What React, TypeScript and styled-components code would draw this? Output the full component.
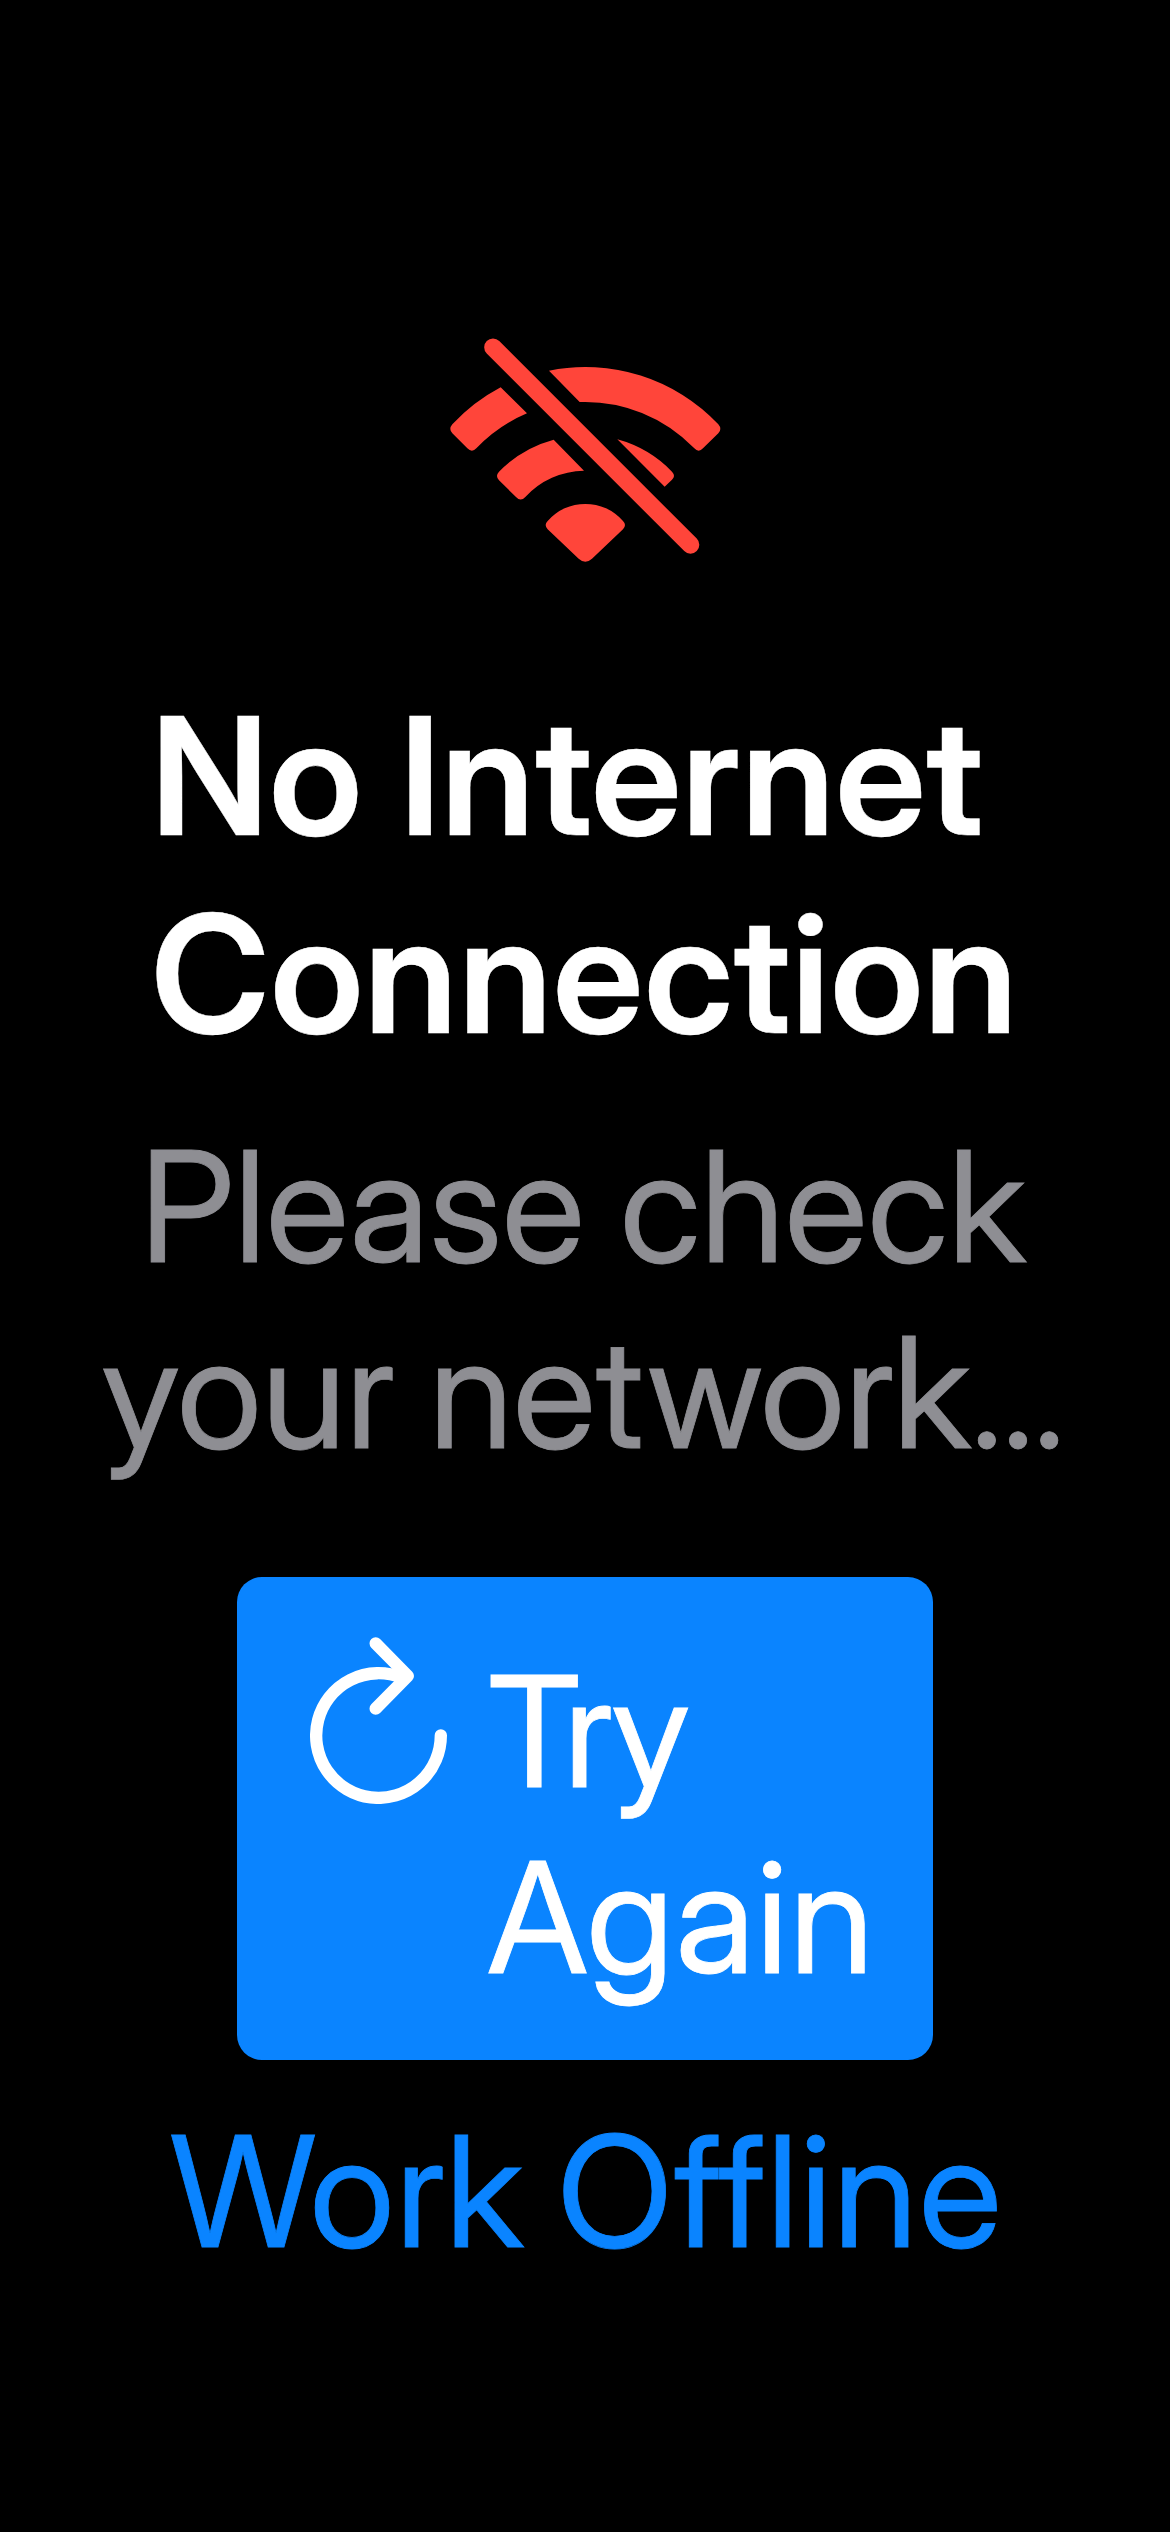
import React from "react";
import styled, { createGlobalStyle } from "styled-components";

const GlobalStyle = createGlobalStyle`
  body {
    margin: 0;
    background: #000;
    font-family: "Inter Display", Inter, "Liberation Sans", sans-serif;
  }
`;

const Screen = styled.main`
  box-sizing: border-box;
  width: 1170px;
  height: 2532px;
  padding-top: 338px;
  overflow: hidden;
  display: flex;
  flex-direction: column;
  align-items: center;
  background: #000;
`;

const WifiOffIcon = styled.svg`
  display: block;
  flex: none;
  width: 270.67px;
  height: 224px;
  margin: 0 0 115px 1px;
  fill: #ff453a;
`;

const Title = styled.h1`
  width: 868px;
  margin: 0 0 40px;
  font-size: 163.5px;
  font-weight: 600;
  line-height: 198px;
  color: #fff;
  -webkit-text-stroke: 0.4px currentColor;
`;

const Message = styled.p`
  margin: 0 4px 92px 0;
  font-size: 154px;
  font-weight: 400;
  line-height: 186px;
  color: #8e8e93;
  text-align: center;
  -webkit-text-stroke: 0.8px currentColor;
`;

const Line = styled.span<{ $track?: number; $word?: number }>`
  display: block;
  white-space: nowrap;
  letter-spacing: ${(p) => p.$track ?? 0}px;
  word-spacing: ${(p) => p.$word ?? 0}px;
`;

const Ellipsis = styled.span`
  font-size: 142px;
  line-height: 0;
`;

const RetryButton = styled.button`
  box-sizing: border-box;
  width: 696px;
  height: 483px;
  margin: 0 0 38px;
  padding: 60px 0 0 73px;
  border: 0;
  border-radius: 25px;
  display: flex;
  align-items: flex-start;
  gap: 40px;
  background: #0a84ff;
  color: #fff;
  font: inherit;
  text-align: left;
`;

const RefreshIcon = styled.svg`
  display: block;
  flex: none;
  width: 137.33px;
  height: 167.33px;
  fill: none;
  stroke: #fff;
  stroke-width: 37;
  stroke-linecap: round;
  stroke-linejoin: round;
`;

const RetryLabel = styled.span`
  padding-top: 1px;
  font-size: 154px;
  line-height: 186px;
  -webkit-text-stroke: 0.8px currentColor;
`;

const OfflineButton = styled.button`
  margin: 0 0 0 3px;
  padding: 0;
  border: 0;
  background: none;
  color: #0a84ff;
  font: inherit;
  font-size: 154px;
  line-height: 186px;
  -webkit-text-stroke: 0.8px currentColor;
`;

export default function App() {
  return (
    <>
      <GlobalStyle />
      <Screen>
        <WifiOffIcon viewBox="60 55 812 672" aria-hidden="true">
          <path d="M212 203L291 281A454 454 0 0 0 139 386Q126 400 112 386L67 341Q55 328 67 314A549 549 0 0 1 212 203Z" />
          <path d="M357 153A549 549 0 0 1 865 314Q877 328 865 341L819 386Q806 400 793 386A454 454 0 0 0 449 247Z" />
          <path d="M371 360L462 453A243 243 0 0 0 286 532Q272 547 258 532L207 482Q195 469 207 456A361 361 0 0 1 371 360Z" />
          <path d="M562 359A361 361 0 0 1 726 456Q738 469 726 480L704 501Z" />
          <path d="M353 604A150 150 0 0 1 579 604Q591 616 579 629L486 717Q466 735 446 717L353 629Q341 616 353 604Z" />
          <path d="M189 83L781.5 675.5" stroke="#ff453a" strokeWidth="53" strokeLinecap="round" />
        </WifiOffIcon>
        <Title>
          <Line $track={0.3}>No Internet</Line>
          <Line $track={0.7}>Connection</Line>
        </Title>
        <Message>
          <Line $word={-3}>Please check</Line>
          <Line $word={-5}>
            your network<Ellipsis>…</Ellipsis>
          </Line>
        </Message>
        <RetryButton>
          <RefreshIcon viewBox="60 50 412 502" aria-hidden="true">
            <path d="M452.5 345A187 187 0 1 1 335 172" />
            <path d="M257 69L353.5 167L257 265" />
          </RefreshIcon>
          <RetryLabel>
            <Line $track={-3.3}>Try</Line>
            <Line $track={1.5}>Again</Line>
          </RetryLabel>
        </RetryButton>
        <OfflineButton>
          <Line $track={1.5} $word={-8}>Work Offline</Line>
        </OfflineButton>
      </Screen>
    </>
  );
}
